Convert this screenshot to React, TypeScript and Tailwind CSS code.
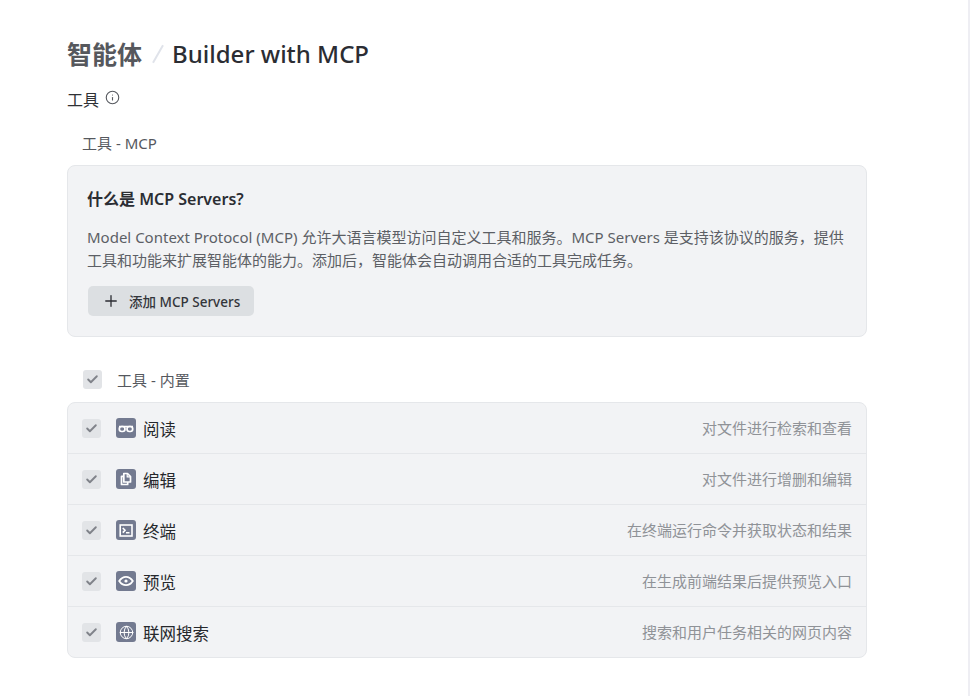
import { Check, Plus, Info, Globe } from "lucide-react";
import type { ReactNode } from "react";

const FONT = "font-['Noto_Sans','Noto_Sans_CJK_SC',sans-serif]";

const GlassesIcon = () => (
  <svg width="16" height="16" viewBox="0 0 16 16" fill="none" stroke="currentColor" strokeWidth="1.7">
    <path d="M1 6.500h14" />
    <rect x="1.300" y="6.500" width="5.700" height="5" rx="2.400" />
    <rect x="9" y="6.500" width="5.700" height="5" rx="2.400" />
  </svg>
);

const FilesIcon = () => (
  <svg width="16" height="16" viewBox="0 0 16 16" fill="none" stroke="currentColor" strokeWidth="1.7">
    <path d="M5.800 11V2.500h3.700l3 3V11z" strokeLinejoin="round" />
    <path d="M5.500 5.300H3.500v8.200h6.200v-2.500" strokeLinejoin="round" />
    <path d="M9.200 2.500v3.300h3.300" strokeWidth="1.200" />
  </svg>
);

const TerminalIcon = () => (
  <svg width="16" height="16" viewBox="0 0 16 16" fill="none" stroke="currentColor" strokeWidth="1.600">
    <rect x="2.200" y="3" width="11.800" height="11" />
    <path d="M4.800 6 7 8.300l-2.200 2.300" />
    <path d="M8 10.800h3.500" />
  </svg>
);

const EyeIcon = () => (
  <svg width="16" height="16" viewBox="0 0 16 16" fill="none" stroke="currentColor" strokeWidth="1.800">
    <path d="M1.200 8C3 5.200 5.300 3.800 8 3.800s5 1.400 6.800 4.200c-1.800 2.800-4.100 4.200-6.800 4.200S3 10.800 1.200 8z" />
    <circle cx="8" cy="8" r="1.600" fill="currentColor" stroke="none" />
  </svg>
);

const TOOLS = [
  { name: "阅读", desc: "对文件进行检索和查看", icon: <GlassesIcon /> },
  { name: "编辑", desc: "对文件进行增删和编辑", icon: <FilesIcon /> },
  { name: "终端", desc: "在终端运行命令并获取状态和结果", icon: <TerminalIcon /> },
  { name: "预览", desc: "在生成前端结果后提供预览入口", icon: <EyeIcon /> },
  { name: "联网搜索", desc: "搜索和用户任务相关的网页内容", icon: <Globe size={15} strokeWidth={1.6} /> },
];

function CheckBox() {
  return (
    <span className="flex h-[19px] w-[19px] shrink-0 items-center justify-center rounded-[3px] bg-[#e2e4e7] text-[#80838a]">
      <Check size={13} strokeWidth={3.5} />
    </span>
  );
}

function ToolRow({ name, desc, icon }: { name: string; desc: string; icon: ReactNode }) {
  return (
    <div className="flex h-[51px] items-center border-b border-[#e5e7ea] pl-[14px] pr-[14px] last:h-[50px] last:border-b-0">
      <CheckBox />
      <span className="ml-[15px] flex h-5 w-5 items-center justify-center rounded-[3px] bg-[#737a90] text-white">
        {icon}
      </span>
      <span className="ml-[7px] mt-[5px] text-[16.5px] text-[#26282c]">{name}</span>
      <span className="ml-auto text-[15px] text-[#8f9297]">{desc}</span>
    </div>
  );
}

export default function App() {
  return (
    <div className={`${FONT} h-[696px] w-[970px] overflow-hidden border-r-2 border-[#eeeef3] bg-white`}>
      <div className="ml-[67px] w-[800px] pt-[37px]">
        {/* Breadcrumb */}
        <div className="flex h-[34px] items-center text-[24px] leading-[34px]">
          <span className="text-[25px] font-bold text-[#56585d]">智能体</span>
          <span className="ml-[15px] mr-[13px] h-5 w-[2px] rotate-[30deg] bg-[#e0e3ea]" />
          <span className="font-medium text-[#2b2d33]">Builder with MCP</span>
        </div>

        <div className="mt-[19px] flex h-5 items-center text-[16px] text-[#2f3135]">
          <span>工具</span>
          <Info size={15} strokeWidth={1.75} className="-mt-[5px] ml-[6px] text-[#55585e]" />
        </div>

        <div className="mt-[23px] pl-[15px] text-[15px] leading-5 text-[#55585e]">工具 - MCP</div>

        {/* MCP card */}
        <div className="mt-[12px] h-[172px] rounded-lg border border-[#e5e7ea] bg-[#f2f3f5] px-[19px] pt-[23px]">
          <div className="text-[16px] font-semibold leading-5 text-[#2b2d33]">什么是 MCP Servers?</div>
          <p className="mt-[17px] text-[15px] leading-[23px] text-[#5c5f65]">
            Model Context Protocol (MCP) 允许大语言模型访问自定义工具和服务。MCP Servers 是支持该协议的服务，提供工具和功能来扩展智能体的能力。添加后，智能体会自动调用合适的工具完成任务。
          </p>
          <button className="ml-px mt-[14px] flex h-[30px] w-[166px] items-center rounded-[5px] bg-[#dcdfe2] pl-[14px] text-[13.5px] font-medium text-[#33353a]">
            <Plus size={18} strokeWidth={1.75} className="text-[#2b2d33]" />
            <span className="ml-[9px] mt-[2px]">添加 MCP Servers</span>
          </button>
        </div>

        {/* Built-in tools */}
        <div className="mt-[32px] flex h-5 items-center pl-[16px] text-[15px] text-[#55585e]">
          <CheckBox />
          <span className="ml-[15px] mt-[2px]">工具 - 内置</span>
        </div>

        <div className="mt-[13px] overflow-hidden rounded-lg border border-[#e5e7ea] bg-[#f2f3f5]">
          {TOOLS.map((tool) => (
            <ToolRow key={tool.name} {...tool} />
          ))}
        </div>
      </div>
    </div>
  );
}
